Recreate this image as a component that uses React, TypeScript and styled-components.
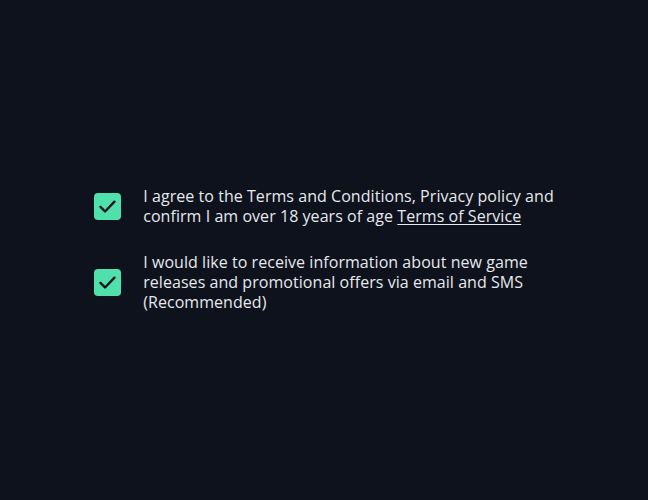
import styled, { createGlobalStyle } from "styled-components";

const GlobalStyle = createGlobalStyle`
  html, body {
    margin: 0;
    padding: 0;
    background: #0d121c;
  }
`;

const Page = styled.div`
  min-height: 100vh;
  display: flex;
  align-items: center;
  justify-content: center;
  font-family: "Open Sans", "Liberation Sans", sans-serif;
`;

const Consents = styled.div`
  display: flex;
  flex-direction: column;
  gap: 26px;
  margin-top: -2px;
`;

const ConsentRow = styled.label`
  display: flex;
  align-items: center;
  gap: 22px;
  cursor: pointer;
`;

const Box = styled.span<{ $checked: boolean }>`
  flex: 0 0 27px;
  width: 27px;
  height: 27px;
  border-radius: 4px;
  background: ${({ $checked }) => ($checked ? "#4fe0ab" : "transparent")};
  border: ${({ $checked }) => ($checked ? "none" : "2px solid #4fe0ab")};
  display: flex;
  align-items: center;
  justify-content: center;
  color: #0d121c;
`;

const Label = styled.span`
  color: #e6e8ec;
  font-size: 16px;
  line-height: 20px;
  letter-spacing: 0.05px;
  white-space: nowrap;
`;

const Link = styled.a`
  color: #e6e8ec;
  text-decoration: underline;
  text-underline-offset: 2px;
`;

const Check = () => (
  <svg width="21" height="21" viewBox="0 0 24 24" fill="none">
    <path
      d="M4 12.5l5.2 5.2L20 6.5"
      stroke="currentColor"
      strokeWidth="2.7"
      strokeLinecap="round"
      strokeLinejoin="round"
    />
  </svg>
);

export default function App() {
  return (
    <>
      <GlobalStyle />
      <Page>
        <Consents>
          <ConsentRow>
            <Box $checked>
              <Check />
            </Box>
            <Label>
              I agree to the Terms and Conditions, Privacy policy and
              <br />
              confirm I am over 18 years of age <Link href="#">Terms of Service</Link>
            </Label>
          </ConsentRow>
          <ConsentRow>
            <Box $checked>
              <Check />
            </Box>
            <Label>
              I would like to receive information about new game
              <br />
              releases and promotional offers via email and SMS
              <br />
              (Recommended)
            </Label>
          </ConsentRow>
        </Consents>
      </Page>
    </>
  );
}
